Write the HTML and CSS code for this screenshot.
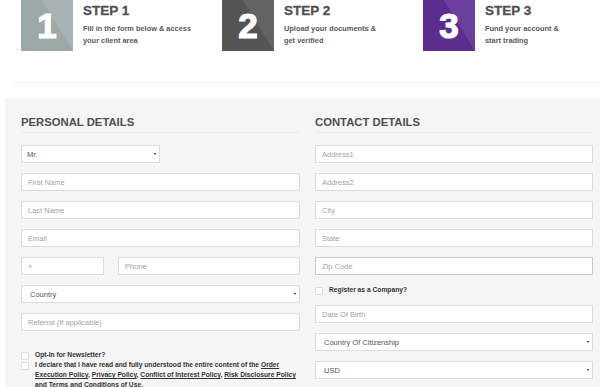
FILE: index.html
```html
<!DOCTYPE html>
<html lang="en">
<head>
    <meta charset="UTF-8">
    <meta name="viewport" content="width=device-width, initial-scale=1.0">
    <title>Open an Account</title>
    <link rel="stylesheet" href="styles.css">
</head>
<body>
    <div class="steps">
        <div class="step">
            <div class="step-num step-num-grey"><span>1</span></div>
            <div class="step-text">
                <span class="step-title">STEP 1</span>
                <p class="step-desc">Fill in the form below &amp; access<br>your client area</p>
            </div>
        </div>
        <div class="step">
            <div class="step-num step-num-dark"><span>2</span></div>
            <div class="step-text">
                <span class="step-title">STEP 2</span>
                <p class="step-desc">Upload your documents &amp;<br>get verified</p>
            </div>
        </div>
        <div class="step">
            <div class="step-num step-num-purple"><span>3</span></div>
            <div class="step-text">
                <span class="step-title">STEP 3</span>
                <p class="step-desc">Fund your account &amp;<br>start trading</p>
            </div>
        </div>
    </div>

    <div class="divider"></div>

    <form class="register" method="post" action="/register">
        <div class="form-col">
            <h2 class="section-title">PERSONAL DETAILS</h2>
            <div class="fields">
                <div class="select-wrap select-short">
                    <select name="title" class="input-select">
                        <option>Mr.</option>
                        <option>Mrs.</option>
                        <option>Ms.</option>
                    </select>
                </div>
                <input type="text" name="first_name" class="input-text" placeholder="First Name">
                <input type="text" name="last_name" class="input-text" placeholder="Last Name">
                <input type="email" name="email" class="input-text" placeholder="Email">
                <div class="phone-row">
                    <input type="text" name="phone_code" class="input-text phone-code" placeholder="+">
                    <input type="text" name="phone" class="input-text" placeholder="Phone">
                </div>
                <div class="select-wrap">
                    <select name="country" class="input-select">
                        <option>Country</option>
                    </select>
                </div>
                <input type="text" name="referral" class="input-text" placeholder="Referral (If applicable)">
            </div>

            <div class="checks">
                <label class="check-row">
                    <input type="checkbox" name="newsletter" class="check-box">
                    <span>Opt-In for Newsletter?</span>
                </label>
                <label class="check-row">
                    <input type="checkbox" name="declaration" class="check-box">
                    <span>I declare that I have read and fully understood the entire content of the <a href="#">Order Execution Policy</a>, <a href="#">Privacy Policy</a>, <a href="#">Conflict of Interest Policy</a>, <a href="#">Risk Disclosure Policy</a> and <a href="#">Terms and Conditions of Use</a>.</span>
                </label>
            </div>
        </div>

        <div class="form-col">
            <h2 class="section-title">CONTACT DETAILS</h2>
            <div class="fields">
                <input type="text" name="address1" class="input-text" placeholder="Address1">
                <input type="text" name="address2" class="input-text" placeholder="Address2">
                <input type="text" name="city" class="input-text" placeholder="City">
                <input type="text" name="state" class="input-text" placeholder="State">
                <input type="text" name="zip" class="input-text input-zip" placeholder="Zip Code">
                <label class="check-row">
                    <input type="checkbox" name="company" class="check-box">
                    <span>Register as a Company?</span>
                </label>
                <input type="text" name="dob" class="input-text" placeholder="Date Of Birth">
                <div class="select-wrap">
                    <select name="citizenship" class="input-select">
                        <option>Country Of Citizenship</option>
                    </select>
                </div>
                <div class="select-wrap">
                    <select name="currency" class="input-select">
                        <option>USD</option>
                        <option>EUR</option>
                    </select>
                </div>
            </div>
        </div>
    </form>
</body>
</html>
```

FILE: styles.css
```css
:root {
    --color-white: #FFFFFF;
    --color-bg: #F5F5F5;
    --color-border: #DCDCDC;
    --color-line: #EBEBEB;
    --color-text: #333333;
    --color-title: #4F4F4F;
    --color-muted: #A3A3A3;
}

html,
body {
    overflow: hidden;
}

body {
    font-family: "Liberation Sans", Arial, sans-serif;
    background-color: var(--color-white);
    margin: 0;
    padding: 0;
    color: var(--color-text);
}

/* Etapes */
.steps {
    display: flex;
    padding-left: 21px;
}

.step {
    display: flex;
    width: 201px;
    flex: none;
}

.step-num {
    position: relative;
    width: 52px;
    height: 51px;
    display: flex;
    justify-content: center;
    align-items: center;
    color: var(--color-white);
    font-size: 35px;
    font-weight: 700;
    line-height: 35px;
    overflow: hidden;
}

.step-num::before {
    content: "";
    position: absolute;
    inset: 0;
    clip-path: polygon(40% 0, 100% 0, 100% 100%);
}

.step-num span {
    position: relative;
    -webkit-text-stroke: 1.2px var(--color-white);
}

.step-num-grey { background-color: #9DA9A9; }
.step-num-grey::before { background-color: #A7B3B3; }
.step-num-dark { background-color: #555555; }
.step-num-dark::before { background-color: #636363; }
.step-num-purple { background-color: #5A2D8F; }
.step-num-purple::before { background-color: #6A3F9E; }

.step-text {
    margin-left: 10px;
}

.step-title {
    display: block;
    margin-top: 3px;
    font-size: 13.5px;
    line-height: 16px;
    font-weight: 700;
    color: var(--color-title);
    -webkit-text-stroke: 0.3px var(--color-title);
}

.step-desc {
    margin: 4px 0 0;
    font-size: 7.4px;
    line-height: 12px;
    font-weight: 700;
    color: #595959;
}

.divider {
    margin: 31px 0 0 13px;
    border-top: 1px solid #EEEEEE;
}

/* Formulaire */
.register {
    margin: 15px 0 0 5px;
    padding: 17px 7px 0 16px;
    background-color: var(--color-bg);
    display: grid;
    grid-template-columns: 279px 278px;
    column-gap: 15px;
    align-items: start;
}

.section-title {
    margin: 0 0 12px;
    padding-bottom: 3px;
    font-size: 11.3px;
    line-height: 14px;
    font-weight: 700;
    color: var(--color-title);
    border-bottom: 1px solid var(--color-line);
}

.fields {
    display: flex;
    flex-direction: column;
    gap: 10px;
}

.input-text,
.input-select {
    display: block;
    width: 100%;
    height: 18px;
    margin: 0;
    padding: 0 6px;
    border: 1px solid var(--color-border);
    border-radius: 0;
    background-color: var(--color-white);
    font-family: "Liberation Sans", Arial, sans-serif;
    font-size: 7.5px;
    color: #555555;
    box-sizing: border-box;
    outline: none;
}

.input-text::placeholder {
    color: var(--color-muted);
}

.input-zip {
    border-color: #C8C8C8;
}

.select-wrap {
    position: relative;
}

.select-short {
    width: 139px;
}

.input-select {
    appearance: none;
    -webkit-appearance: none;
    padding-left: 8px;
}

.select-short .input-select {
    padding-left: 5px;
}

.select-wrap::after {
    content: "";
    position: absolute;
    right: 4px;
    top: 8px;
    border-left: 1.5px solid transparent;
    border-right: 1.5px solid transparent;
    border-top: 2.5px solid #111111;
    pointer-events: none;
}

.phone-row {
    display: flex;
    gap: 14px;
}

.phone-code {
    width: 83px;
    flex: none;
}

/* Cases a cocher */
.checks {
    margin-top: 19px;
}

.check-row {
    display: flex;
    align-items: flex-start;
    gap: 6px;
    font-size: 6.7px;
    line-height: 10px;
    font-weight: 700;
    color: var(--color-text);
}

.check-row span {
    flex: 1;
}

.check-row a {
    color: var(--color-text);
    text-decoration: underline;
}

.check-box {
    appearance: none;
    -webkit-appearance: none;
    flex: none;
    width: 8px;
    height: 8px;
    margin: 2px 0 0;
    border: 1px solid var(--color-border);
    border-radius: 1px;
    background-color: var(--color-white);
}
```
